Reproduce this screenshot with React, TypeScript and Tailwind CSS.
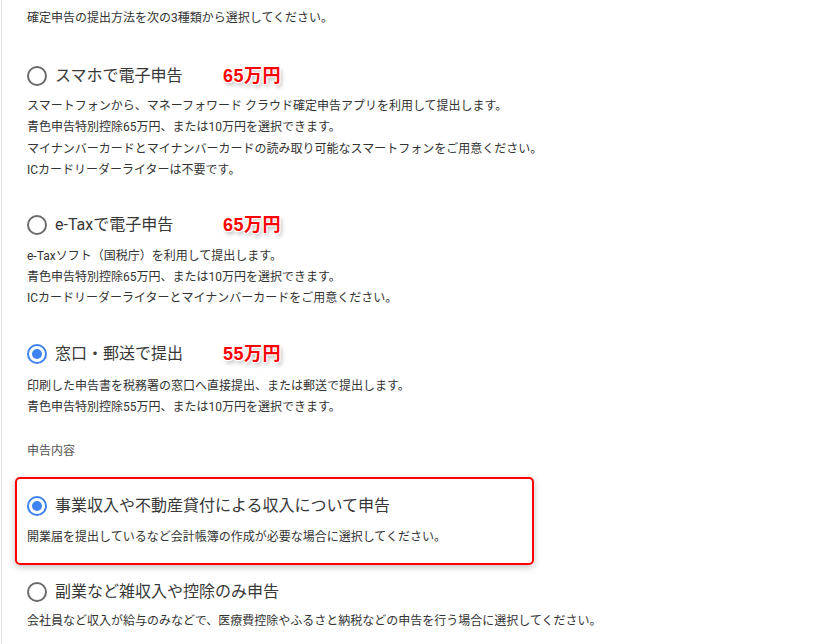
import type { ReactNode } from 'react'

const font = 'font-["Roboto","Noto_Sans_CJK_JP",sans-serif]'

function Radio({ checked }: { checked?: boolean }) {
  return checked ? (
    <span className="flex h-[20px] w-[20px] shrink-0 items-center justify-center rounded-full border-2 border-[#3d84f2]">
      <span className="h-[10px] w-[10px] rounded-full bg-[#3d84f2]" />
    </span>
  ) : (
    <span className="h-[20px] w-[20px] shrink-0 rounded-full border-2 border-[#6b6b6b]" />
  )
}

function Price({ children }: { children: ReactNode }) {
  return (
    <span className='font-["Liberation_Sans","Noto_Sans_CJK_JP",sans-serif] text-[18px] font-bold leading-none tracking-[0.5px] text-[#ff0000] [text-shadow:-1px_-1px_0_#fff,1px_-1px_0_#fff,-1px_1px_0_#fff,1px_1px_0_#fff,0_0_2px_#fff,2px_3px_4px_rgba(0,0,0,0.35)]'>
      {children}
    </span>
  )
}

function Option({
  label, price, checked, lines, className = '', descGap = 'mt-[8px]',
}: {
  label: string
  price?: string
  checked?: boolean
  lines: string[]
  className?: string
  descGap?: string
}) {
  return (
    <div className={className}>
      <div className="flex h-[24px] items-center">
        <Radio checked={checked} />
        <span className="ml-[8px] w-[168px] shrink-0 whitespace-nowrap text-[16px] text-[#383838]">{label}</span>
        {price && <Price>{price}</Price>}
      </div>
      <div className={`${descGap} text-[12px] leading-[21.4px] text-[#333]`}>
        {lines.map(l => (
          <p key={l} className="whitespace-nowrap">{l}</p>
        ))}
      </div>
    </div>
  )
}

export default function App() {
  return (
    <div className={`h-[644px] w-[822px] overflow-hidden bg-white ${font}`}>
      <div className="ml-[1px] h-full border-l border-[#e3e3e3] pl-[25px] pt-[8px]">
        <p className="text-[12px] leading-[21px] text-[#333]">確定申告の提出方法を次の3種類から選択してください。</p>

        <Option
          className="mt-[35px]"
          label="スマホで電子申告"
          price="65万円"
          lines={[
            'スマートフォンから、マネーフォワード クラウド確定申告アプリを利用して提出します。',
            '青色申告特別控除65万円、または10万円を選択できます。',
            'マイナンバーカードとマイナンバーカードの読み取り可能なスマートフォンをご用意ください。',
            'ICカードリーダーライターは不要です。',
          ]}
        />

        <Option
          className="mt-[31px]"
          label="e-Taxで電子申告"
          price="65万円"
          descGap="mt-[9px]"
          lines={[
            'e-Taxソフト（国税庁）を利用して提出します。',
            '青色申告特別控除65万円、または10万円を選択できます。',
            'ICカードリーダーライターとマイナンバーカードをご用意ください。',
          ]}
        />

        <Option
          className="mt-[32px]"
          label="窓口・郵送で提出"
          price="55万円"
          checked
          descGap="mt-[10px]"
          lines={[
            '印刷した申告書を税務署の窓口へ直接提出、または郵送で提出します。',
            '青色申告特別控除55万円、または10万円を選択できます。',
          ]}
        />

        <p className="mt-[22px] text-[12px] leading-[21px] text-[#555]">申告内容</p>

        <div className="ml-[-12px] mt-[15px] w-[519px] rounded-[5px] border-2 border-[#ff0000] pb-[15px] pl-[10px] pt-[15px] shadow-[0_2px_7px_rgba(0,0,0,0.25)]">
          <Option
            label="事業収入や不動産貸付による収入について申告"
            checked
            descGap="mt-[9px]"
            lines={['開業届を提出しているなど会計帳簿の作成が必要な場合に選択してください。']}
          />
        </div>

        <Option
          className="mt-[15px]"
          label="副業など雑収入や控除のみ申告"
          descGap="mt-[7px]"
          lines={['会社員など収入が給与のみなどで、医療費控除やふるさと納税などの申告を行う場合に選択してください。']}
        />
      </div>
    </div>
  )
}
